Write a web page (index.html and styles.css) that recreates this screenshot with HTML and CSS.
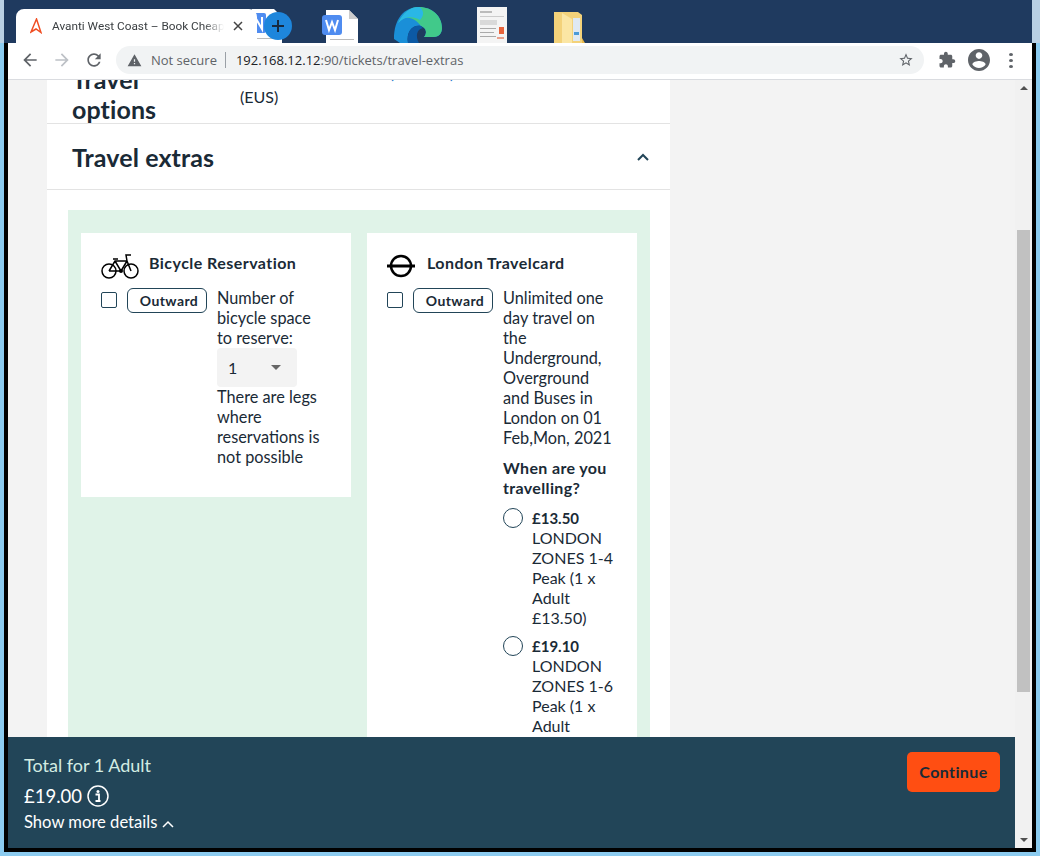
FILE: index.html
```html
<!DOCTYPE html>
<html lang="en">
<head>
    <meta charset="UTF-8">
    <title>Avanti West Coast – Book Cheap Train Tickets</title>
    <link rel="stylesheet" href="styles.css">
</head>
<body>
    <div class="window">
        <div class="tabstrip">
            <!-- desktop icons showing through behind the browser strip -->
            <div class="desktop-icons">
                <svg class="d-icon d-doc1" viewBox="0 0 30 34"><path d="M0 0h22l8 8v26H0z" fill="#fff"/><rect x="0" y="4" width="14" height="20" rx="2" fill="#4f8cf0"/><path d="M3 20V8l7 12V8" stroke="#fff" stroke-width="2" fill="none"/><rect x="4" y="29" width="22" height="1" fill="#bbb"/></svg>
                <svg class="d-icon d-doc2" viewBox="0 0 36 33"><path d="M4 0h23l9 9v24H4z" fill="#fff"/><path d="M27 0l9 9h-9z" fill="#ccc"/><rect x="0" y="5" width="20" height="20" rx="3" fill="#4f8cf0"/><path d="M4 10l3 10 3-8 3 8 3-10" stroke="#fff" stroke-width="2" fill="none"/><rect x="8" y="29" width="24" height="1" fill="#bbb"/></svg>
                <svg class="d-icon d-edge" viewBox="0 0 48 36"><path d="M0 32C0 12 10 0 25 0c13 0 23 9 23 21 0 5-3 9-8 9H30c3-3 3-9-3-11-8-2-15 5-13 17H6z" fill="#1a8fd8"/><path d="M25 0c13 0 23 9 23 21 0 5-3 9-8 9H30c3-3 3-9-3-11C22 12 12 6 4 16 9 6 16 0 25 0z" fill="#41c98a"/><path d="M25 0C16 0 9 6 4 16c7-7 15-7 22-3 6-6 2-12-1-13z" fill="#2ab7e6"/><path d="M14 36c-2-12 5-19 13-17l2 2c-6 1-8 8-4 15z" fill="#0c59a4"/></svg>
                <svg class="d-icon d-thumb" viewBox="0 0 30 36"><rect width="30" height="36" fill="#f4f4f4"/><rect x="3" y="4" width="12" height="2" fill="#bbb"/><rect x="3" y="9" width="24" height="1" fill="#ccc"/><rect x="3" y="13" width="17" height="5" fill="#d9d9d9"/><rect x="3" y="21" width="16" height="1" fill="#aaa"/><rect x="3" y="25" width="14" height="1" fill="#aaa"/><rect x="3" y="29" width="16" height="1" fill="#aaa"/><rect x="22" y="20" width="5" height="7" fill="#e8643c"/><rect x="20" y="30" width="7" height="2" fill="#e8a08c"/></svg>
                <svg class="d-icon d-folder" viewBox="0 0 32 31"><path d="M0 0h24l4 3v28H0z" fill="#f3d27a"/><path d="M19 6h7v23h-7z" fill="#dfe9f2"/><path d="M20 20h5v3h-5z" fill="#4a9ad8"/><path d="M8 1l10 6v24H8z" fill="#fbe6a4"/><path d="M28 26l3 5h-3z" fill="#e8b94c"/></svg>
            </div>
            <div class="tab">
                <svg class="favicon" viewBox="0 0 12 16"><path d="M6.500 1L1 14l5-3 5 3.500z" fill="none" stroke="#f04e23" stroke-width="1.500"/></svg>
                <span class="tab-title">Avanti West Coast – Book Cheap Train Tickets</span>
                <svg class="tab-close" viewBox="0 0 10 10"><path d="M1 1l8 8M9 1l-8 8" stroke="#444" stroke-width="1.500"/></svg>
            </div>
            <div class="new-tab">
                <svg viewBox="0 0 14 14"><path d="M7 1v12M1 7h12" stroke="#17293f" stroke-width="2"/></svg>
            </div>
        </div>

        <div class="toolbar">
            <svg class="tb-icon" viewBox="0 0 24 24"><path d="M20 11H7.830l5.590-5.590L12 4l-8 8 8 8 1.410-1.410L7.830 13H20v-2z" fill="#5f6368"/></svg>
            <svg class="tb-icon" viewBox="0 0 24 24"><path d="M4 11h12.170l-5.590-5.590L12 4l8 8-8 8-1.410-1.410L16.170 13H4v-2z" fill="#bdc1c6"/></svg>
            <svg class="tb-icon" viewBox="0 0 24 24"><path d="M17.650 6.350C16.200 4.900 14.210 4 12 4c-4.420 0-7.990 3.580-7.990 8s3.570 8 7.990 8c3.730 0 6.840-2.550 7.730-6h-2.080c-.82 2.330-3.040 4-5.650 4-3.310 0-6-2.690-6-6s2.690-6 6-6c1.660 0 3.140.69 4.220 1.780L13 11h7V4l-2.350 2.350z" fill="#5f6368"/></svg>
            <div class="omnibox">
                <svg class="warn" viewBox="0 0 24 24"><path d="M1 21h22L12 2 1 21zm12-3h-2v-2h2v2zm0-4h-2v-4h2v4z" fill="#5f6368"/></svg>
                <span class="not-secure">Not secure</span>
                <span class="omni-sep"></span>
                <span class="url">192.168.12.12<span class="url-path">:90/tickets/travel-extras</span></span>
                <svg class="star" viewBox="0 0 24 24"><path d="M22 9.240l-7.190-.62L12 2 9.190 8.630 2 9.240l5.460 4.730L5.820 21 12 17.270 18.180 21l-1.630-7.030L22 9.240zM12 15.400l-3.760 2.270 1-4.280-3.320-2.880 4.380-.38L12 6.100l1.710 4.040 4.380.38-3.320 2.880 1 4.280L12 15.400z" fill="#5f6368"/></svg>
            </div>
            <svg class="tb-puzzle" viewBox="0 0 24 24"><path d="M20.500 11H19V7c0-1.100-.9-2-2-2h-4V3.500C13 2.120 11.880 1 10.500 1S8 2.120 8 3.500V5H4c-1.100 0-1.990.9-1.990 2v3.800H3.500c1.490 0 2.700 1.210 2.700 2.700s-1.210 2.700-2.700 2.700H2V20c0 1.100.9 2 2 2h3.800v-1.500c0-1.490 1.210-2.700 2.700-2.700 1.490 0 2.700 1.210 2.700 2.700V22H17c1.100 0 2-.9 2-2v-4h1.500c1.380 0 2.500-1.120 2.500-2.500S21.880 11 20.500 11z" fill="#5f6368"/></svg>
            <svg class="tb-avatar" viewBox="2 2 20 20"><path d="M12 2C6.480 2 2 6.480 2 12s4.480 10 10 10 10-4.480 10-10S17.520 2 12 2zm0 3c1.660 0 3 1.340 3 3s-1.340 3-3 3-3-1.340-3-3 1.340-3 3-3zm0 14.200c-2.500 0-4.710-1.280-6-3.220.03-1.990 4-3.080 6-3.080 1.990 0 5.970 1.090 6 3.080-1.290 1.940-3.500 3.220-6 3.220z" fill="#5f6368"/></svg>
            <div class="tb-dots"><i></i><i></i><i></i></div>
        </div>

        <div class="content">
            <div class="viewport">
                <div class="panel">
                    <div class="accordion-row row-options">
                        <h2 class="row-title">Travel options</h2>
                        <div class="row-text">Nuneaton to London <a class="row-link">(NUNEA)</a> to London<br>(EUS)</div>
                        <svg class="chevron" viewBox="0 0 12 8"><path d="M1 1l5 5 5-5" fill="none" stroke="#224558" stroke-width="2"/></svg>
                    </div>
                    <div class="accordion-row row-extras">
                        <h2 class="row-title">Travel extras</h2>
                        <svg class="chevron" viewBox="0 0 12 8"><path d="M1 7l5-5 5 5" fill="none" stroke="#224558" stroke-width="2"/></svg>
                    </div>
                    <div class="extras">
                        <div class="extra-card">
                            <div class="extra-head">
                                <svg class="bike" viewBox="0 0 38 26"><g fill="none" stroke="#000" stroke-width="1.500"><circle cx="8" cy="18" r="7"/><circle cx="30" cy="18" r="7"/><path d="M8 18l6-10h12l4 10M14 8l6 10h-12M26 8l-6 10M26 8l-1-6h5M12 6h5"/></g><circle cx="20" cy="18" r="2"/></svg>
                                <h3 class="extra-title">Bicycle Reservation</h3>
                            </div>
                            <div class="extra-body">
                                <span class="check"></span>
                                <span class="leg-badge">Outward</span>
                                <div class="extra-text">
                                    <p>Number of bicycle space to reserve:</p>
                                    <div class="select-box"><span>1</span><i class="select-arrow"></i></div>
                                    <p>There are legs where reservations is not possible</p>
                                </div>
                            </div>
                        </div>
                        <div class="extra-card">
                            <div class="extra-head">
                                <svg class="roundel" viewBox="0 0 28 24"><circle cx="14" cy="12" r="10" fill="none" stroke="#000" stroke-width="2.500"/><rect y="10.500" width="28" height="3"/></svg>
                                <h3 class="extra-title">London Travelcard</h3>
                            </div>
                            <div class="extra-body">
                                <span class="check"></span>
                                <span class="leg-badge">Outward</span>
                                <div class="extra-text">
                                    <p>Unlimited one day travel on the Underground, Overground and Buses in London on 01 Feb,Mon, 2021</p>
                                    <p class="when">When are you travelling?</p>
                                    <div class="fare">
                                        <span class="radio"></span>
                                        <div class="fare-text"><b>£13.50</b><br>LONDON ZONES 1-4 Peak (1 x Adult £13.50)</div>
                                    </div>
                                    <div class="fare">
                                        <span class="radio"></span>
                                        <div class="fare-text"><b>£19.10</b><br>LONDON ZONES 1-6 Peak (1 x Adult £19.10)</div>
                                    </div>
                                </div>
                            </div>
                        </div>
                    </div>
                </div>

                <div class="basket">
                    <div class="basket-info">
                        <div class="basket-label">Total for 1 Adult</div>
                        <div class="basket-price">£19.00
                            <svg class="info" viewBox="0 0 22 22"><circle cx="11" cy="11" r="10" fill="none" stroke="#fff" stroke-width="1.500"/><circle cx="11" cy="6.500" r="1.500" fill="#fff"/><path d="M8.500 9.500H12V16h1.500M8.500 16h4" fill="none" stroke="#fff" stroke-width="1.800"/></svg>
                        </div>
                        <div class="basket-more">Show more details
                            <svg class="more-chev" viewBox="0 0 12 8"><path d="M1 7l5-5 5 5" fill="none" stroke="#fff" stroke-width="1.500"/></svg>
                        </div>
                    </div>
                    <button class="continue">Continue</button>
                </div>
            </div>

            <div class="scrollbar">
                <i class="sb-up"></i>
                <div class="sb-thumb"></div>
                <i class="sb-down"></i>
            </div>
        </div>
    </div>
</body>
</html>
```

FILE: styles.css
```css
* {
    box-sizing: border-box;
}

html, body {
    margin: 0;
    padding: 0;
    height: 100%;
    overflow: hidden;
}

body {
    background: linear-gradient(#b9d0e4 43px, #8ccbef 43px);
    font-family: Lato, Arial, sans-serif;
    color: #1a2a36;
}

.window {
    width: 1032px;
    height: 852px;
    margin-left: 4px;
    background: linear-gradient(transparent 43px, #000 43px);
    display: flex;
    flex-direction: column;
    padding: 0 4px 4px 4px;
}

/* browser strip */
.tabstrip {
    height: 43px;
    background: #1f3a5f;
    position: relative;
    margin-left: -4px;
    padding-left: 12px;
    flex-shrink: 0;
}

.desktop-icons {
    position: absolute;
    inset: 0;
}

.d-icon {
    position: absolute;
    bottom: 0;
}

.d-doc1 { left: 248px; width: 30px; height: 34px; }
.d-doc2 { left: 318px; width: 36px; height: 33px; }
.d-edge { left: 390px; width: 48px; height: 36px; }
.d-thumb { left: 473px; width: 30px; height: 36px; }
.d-folder { left: 550px; width: 32px; height: 31px; }

.tab {
    position: absolute;
    left: 12px;
    top: 9px;
    width: 241px;
    height: 34px;
    background: #fff;
    border-radius: 8px 8px 0 0;
    display: flex;
    align-items: center;
    padding-left: 14px;
    font-family: Roboto, Arial, sans-serif;
    font-size: 11.800px;
    color: #3c4043;
}

.favicon {
    width: 12px;
    height: 16px;
    flex-shrink: 0;
}

.tab-title {
    margin-left: 10px;
    width: 172px;
    white-space: nowrap;
    overflow: hidden;
    -webkit-mask-image: linear-gradient(to right, #000 88%, transparent);
    mask-image: linear-gradient(to right, #000 88%, transparent);
}

.tab-close {
    width: 10px;
    height: 10px;
    margin-left: 9px;
}

.new-tab {
    position: absolute;
    left: 260px;
    top: 12px;
    width: 28px;
    height: 28px;
    border-radius: 50%;
    background: #1e86dc;
    display: flex;
    align-items: center;
    justify-content: center;
}

.new-tab svg {
    width: 14px;
    height: 14px;
}

.toolbar {
    height: 37px;
    background: #fff;
    border-bottom: 1px solid #dadce0;
    display: flex;
    align-items: center;
    padding-left: 12px;
    flex-shrink: 0;
    padding-bottom: 2px;
}

.tb-icon {
    width: 20px;
    height: 20px;
    margin-right: 12px;
}

.omnibox {
    width: 808px;
    height: 28px;
    background: #f1f3f4;
    border-radius: 14px;
    display: flex;
    align-items: center;
    padding-left: 11px;
    font-family: "Open Sans", Arial, sans-serif;
    font-size: 13px;
}

.warn {
    width: 15px;
    height: 15px;
}

.not-secure {
    margin-left: 9px;
    color: #5f6368;
}

.omni-sep {
    width: 1px;
    height: 16px;
    background: #9aa0a6;
    margin: 0 10px 0 8px;
}

.url {
    color: #202124;
}

.url-path {
    color: #5f6368;
}

.star {
    width: 16px;
    height: 16px;
    margin-left: auto;
    margin-right: 10px;
}

.tb-puzzle {
    width: 18px;
    height: 18px;
    margin-left: 14px;
}

.tb-avatar {
    width: 22px;
    height: 22px;
    margin-left: 12px;
}

.tb-dots {
    margin-left: 19px;
    display: flex;
    flex-direction: column;
    gap: 3px;
}

.tb-dots i {
    width: 4px;
    height: 3px;
    background: #5f6368;
    border-radius: 50%;
    display: block;
}

/* page area */
.content {
    flex: 1;
    display: flex;
    min-height: 0;
}

.viewport {
    flex: 1;
    position: relative;
    overflow: hidden;
    background: #f3f3f3;
}

.panel {
    width: 623px;
    margin-left: 39px;
    margin-top: -50px;
    background: #fff;
}

.accordion-row {
    display: flex;
    border-bottom: 1px solid #e3e3e3;
    padding-left: 25px;
    padding-right: 21px;
    position: relative;
}

.row-options {
    height: 94px;
    padding-top: 34px;
}

.row-extras {
    height: 66px;
    align-items: center;
    justify-content: space-between;
}

.row-title {
    margin: 0;
    font-size: 25px;
    line-height: 30px;
    font-weight: 700;
    letter-spacing: .1px;
    color: #1a2a36;
}

.row-options .row-title {
    width: 168px;
    padding-right: 60px;
}

.row-text {
    font-size: 16px;
    line-height: 24px;
    margin-top: -3px;
    white-space: nowrap;
}

.row-link {
    color: #1a73c9;
}

.chevron {
    width: 12px;
    height: 8px;
}

.row-options .chevron {
    position: absolute;
    right: 22px;
    top: 38px;
}

.extras {
    background: #e0f3e8;
    margin: 20px 20px 0 21px;
    padding: 23px 13px 40px;
    display: flex;
    align-items: flex-start;
    gap: 16px;
}

.extra-card {
    width: 270px;
    background: #fff;
    padding: 20px;
    padding-bottom: 30px;
}

.extra-head {
    display: flex;
    align-items: center;
    height: 26px;
    margin-bottom: 9px;
}

.bike {
    width: 38px;
    height: 26px;
    margin-right: 10px;
    flex-shrink: 0;
}

.roundel {
    width: 28px;
    height: 24px;
    margin-right: 12px;
    flex-shrink: 0;
}

.extra-title {
    margin: 0 0 6px;
    font-size: 16px;
    line-height: 20px;
    font-weight: 700;
    letter-spacing: .45px;
}

.extra-body {
    display: flex;
    align-items: flex-start;
}

.check {
    width: 16px;
    height: 16px;
    border: 1px solid #224558;
    border-radius: 2px;
    margin-top: 4px;
    flex-shrink: 0;
}

.leg-badge {
    width: 80px;
    height: 25px;
    margin-left: 10px;
    padding-left: 4px;
    border: 1px solid #224558;
    border-radius: 6px;
    font-size: 14px;
    font-weight: 700;
    letter-spacing: .4px;
    display: flex;
    align-items: center;
    justify-content: center;
    flex-shrink: 0;
}

.extra-text {
    margin-left: 10px;
    font-size: 16px;
    line-height: 20px;
    min-width: 0;
}

.extra-text p {
    margin: 0;
    font-size: 16.300px;
    max-width: 110px;
}

.select-box {
    width: 80px;
    height: 39px;
    background: #f3f3f3;
    border-radius: 4px;
    display: flex;
    align-items: center;
    justify-content: space-between;
    padding: 0 16px 0 11px;
}

.select-arrow {
    width: 0;
    height: 0;
    border-left: 5px solid transparent;
    border-right: 5px solid transparent;
    border-top: 5px solid #666;
}

.extra-text .when {
    margin-top: 10px;
    padding-bottom: 2px;
    font-size: 16px;
    font-weight: 700;
    letter-spacing: .35px;
}

.fare {
    display: flex;
    margin-top: 8px;
}

.fare-text b {
    font-size: 15px;
}

.radio {
    width: 20px;
    height: 20px;
    border: 1.500px solid #224558;
    border-radius: 50%;
    flex-shrink: 0;
    margin-right: 9px;
}

/* sticky total */
.basket {
    position: absolute;
    left: 0;
    right: 0;
    bottom: 0;
    height: 111px;
    background: #224558;
    display: flex;
    justify-content: space-between;
    padding: 15px 15px 0 16px;
}

.basket-label {
    font-size: 18px;
    line-height: 26px;
    color: #d3ece3;
}

.basket-price {
    font-size: 18.500px;
    line-height: 30px;
    color: #fff;
    display: flex;
    align-items: center;
    gap: 5px;
    margin-top: 3px;
}

.info {
    width: 22px;
    height: 22px;
}

.basket-more {
    font-size: 16.600px;
    line-height: 22px;
    color: #fff;
}

.more-chev {
    width: 12px;
    height: 8px;
}

.continue {
    width: 93px;
    height: 40px;
    border: 0;
    border-radius: 5px;
    background: #ff4e12;
    color: #1a2a36;
    font-family: inherit;
    font-size: 16px;
    font-weight: 700;
    letter-spacing: .4px;
    padding: 0 0 2px;
}

.scrollbar {
    width: 17px;
    background: #f1f1f1;
    display: flex;
    flex-direction: column;
    align-items: center;
}

.sb-up, .sb-down {
    width: 0;
    height: 0;
    border-left: 4px solid transparent;
    border-right: 4px solid transparent;
}

.sb-up {
    border-bottom: 4px solid #505050;
    margin-top: 6px;
}

.sb-thumb {
    width: 13px;
    height: 462px;
    background: #c1c1c1;
    margin-top: 140px;
}

.sb-down {
    border-top: 4px solid #505050;
    margin-top: auto;
    margin-bottom: 6px;
}
```
